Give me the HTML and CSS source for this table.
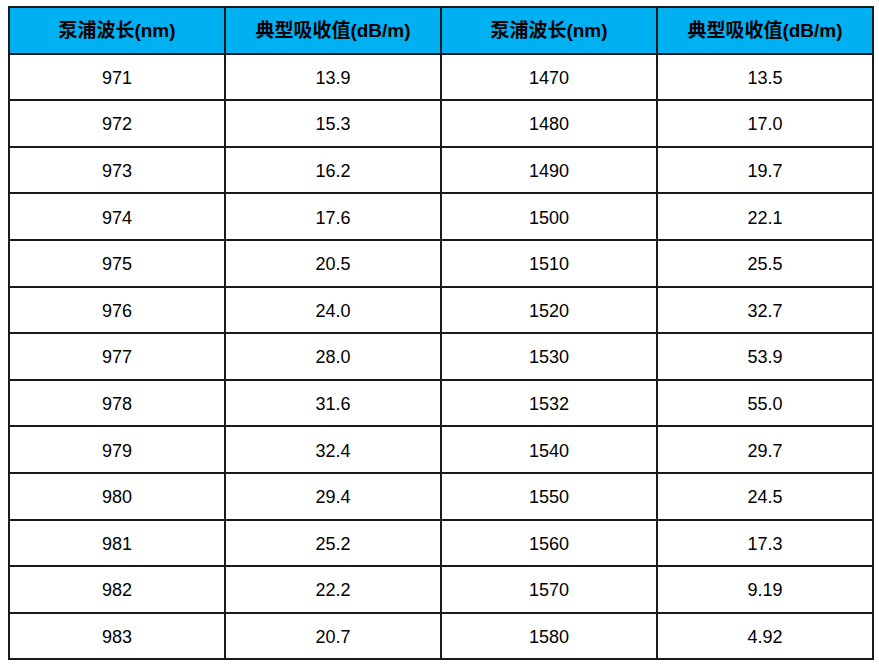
FILE: index.html
```html
<!DOCTYPE html>
<html>
<head>
<meta charset="utf-8">
<link rel="stylesheet" href="styles.css">
</head>
<body>
<table class="data">
<thead>
<tr><th>泵浦波长(nm)</th><th>典型吸收值(dB/m)</th><th>泵浦波长(nm)</th><th>典型吸收值(dB/m)</th></tr>
</thead>
<tbody>
<tr><td>971</td><td>13.9</td><td>1470</td><td>13.5</td></tr>
<tr><td>972</td><td>15.3</td><td>1480</td><td>17.0</td></tr>
<tr><td>973</td><td>16.2</td><td>1490</td><td>19.7</td></tr>
<tr><td>974</td><td>17.6</td><td>1500</td><td>22.1</td></tr>
<tr><td>975</td><td>20.5</td><td>1510</td><td>25.5</td></tr>
<tr><td>976</td><td>24.0</td><td>1520</td><td>32.7</td></tr>
<tr><td>977</td><td>28.0</td><td>1530</td><td>53.9</td></tr>
<tr><td>978</td><td>31.6</td><td>1532</td><td>55.0</td></tr>
<tr><td>979</td><td>32.4</td><td>1540</td><td>29.7</td></tr>
<tr><td>980</td><td>29.4</td><td>1550</td><td>24.5</td></tr>
<tr><td>981</td><td>25.2</td><td>1560</td><td>17.3</td></tr>
<tr><td>982</td><td>22.2</td><td>1570</td><td>9.19</td></tr>
<tr><td>983</td><td>20.7</td><td>1580</td><td>4.92</td></tr>
</tbody>
</table>
</body>
</html>
```
FILE: styles.css
```css
html, body {
  margin: 0;
  padding: 0;
  background: #ffffff;
}
body {
  padding: 6px 0 0 8px;
  font-family: "Liberation Sans", Arial, "Noto Sans CJK SC", sans-serif;
  color: #000;
}
.data {
  border-collapse: collapse;
  width: 866px;
  table-layout: fixed;
}
.data th, .data td {
  border: 2px solid #1a1a1a;
  text-align: center;
  vertical-align: middle;
  padding: 2px 0 0 0;
  height: 42.6px;
  font-size: 18px;
  line-height: 20px;
}
.data th {
  background: #00b0f0;
  font-weight: bold;
  font-size: 19px;
  color: #000;
}
```
